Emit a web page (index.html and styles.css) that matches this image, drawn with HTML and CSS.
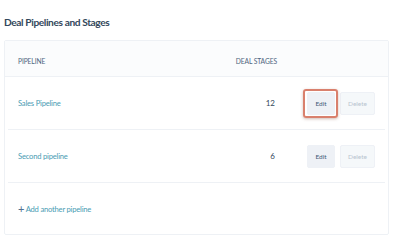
FILE: index.html
```html
<!DOCTYPE html>
<html>
<head>
<meta charset="utf-8">
<link rel="stylesheet" href="styles.css">
</head>
<body>
<div class="page">
  <h1 class="title">Deal Pipelines and Stages</h1>
  <div class="card">
    <div class="row head">
      <div class="name">PIPELINE</div>
      <div class="stages">DEAL STAGES</div>
      <div class="actions"></div>
    </div>
    <div class="row">
      <div class="name link">Sales Pipeline</div>
      <div class="stages num">12</div>
      <div class="actions">
        <span class="highlight"><button class="btn edit">Edit</button></span>
        <button class="btn del">Delete</button>
      </div>
    </div>
    <div class="row">
      <div class="name link">Second pipeline</div>
      <div class="stages num">6</div>
      <div class="actions">
        <button class="btn edit">Edit</button>
        <button class="btn del">Delete</button>
      </div>
    </div>
    <div class="row add">
      <div class="name link"><span class="plus">+</span> Add another pipeline</div>
    </div>
  </div>
</div>
</body>
</html>
```
FILE: styles.css
```css
html, body {
  margin: 0;
  padding: 0;
  background: #ffffff;
}
.page {
  font-family: Lato, "Noto Sans", sans-serif;
  color: #33475b;
  padding: 14px 7px 0 4px;
}
.title {
  margin: 0;
  font-size: 10.2px;
  font-weight: 700;
  line-height: 17px;
  letter-spacing: -0.4px;
  height: 26px;
}
.card {
  border: 1px solid #eef1f5;
  border-radius: 2px;
}
.row {
  display: flex;
  align-items: center;
  height: 52px;
  margin: 0 3px;
  padding: 0 10px;
  border-top: 1px solid #eef1f5;
}
.row.add {
  height: 51px;
}
.row.head {
  height: 30px;
  padding-top: 5px;
  border-top: none;
  margin: 0;
  padding-left: 13px;
  padding-right: 13px;
  background: #fbfcfd;
  border-bottom: 1px solid #eef1f5;
}
.row.head + .row {
  border-top: none;
}
.head .name, .head .stages {
  font-size: 6.7px;
  color: #4f6680;
  letter-spacing: -0.1px;
}
.name {
  flex: 1;
}
.link {
  font-size: 7.6px;
  color: #4a9cb3;
  letter-spacing: -0.2px;
}
.plus {
  font-size: 11px;
  color: #516f90;
  vertical-align: -1px;
}
.stages {
  text-align: right;
}
.num {
  font-size: 8px;
  color: #33475b;
}
.actions {
  width: 68px;
  margin-left: 32px;
  display: flex;
  align-items: center;
  gap: 5px;
}
.head .actions {
  margin-left: 30px;
}
.btn {
  font-family: Lato, "Noto Sans", sans-serif;
  font-size: 6.5px;
  height: 23px;
  border-radius: 2px;
  border: 1px solid #eef1f6;
  padding: 0;
}
.edit {
  width: 28px;
  background: #eef1f6;
  color: #425b76;
}
.del {
  width: 35px;
  background: #f5f8fa;
  color: #b9c4d0;
}
.highlight {
  position: relative;
  display: inline-flex;
}
.highlight::after {
  content: "";
  position: absolute;
  top: -3px;
  bottom: -3px;
  left: -4px;
  right: -3px;
  border: 2.5px solid #d9806d;
  border-radius: 3px;
  box-shadow: 0 1px 3px rgba(120, 60, 40, 0.35);
}
.highlight .edit {
  width: 28px;
  height: 23px;
}
```
